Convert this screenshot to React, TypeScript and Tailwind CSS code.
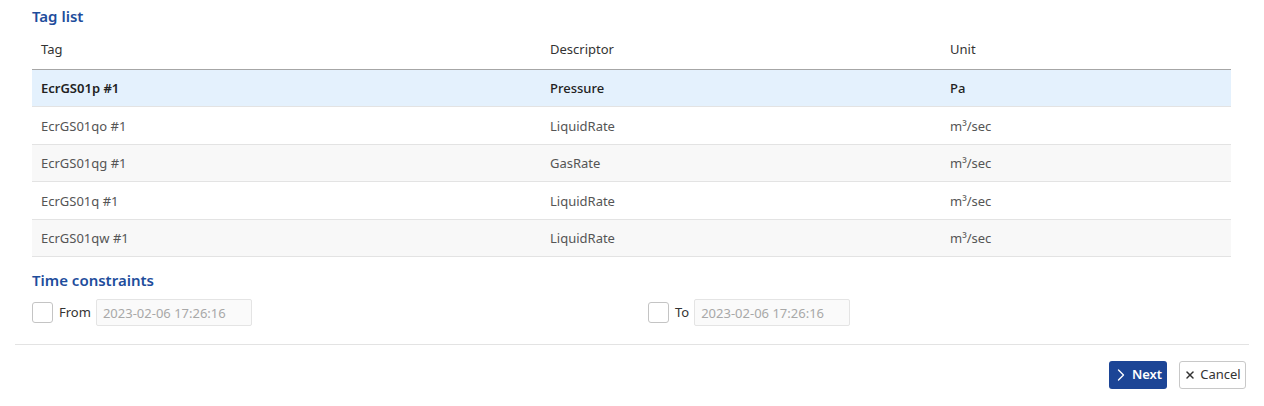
import { ChevronRight, X } from "lucide-react";

const rows = [
  { tag: "EcrGS01p #1", descriptor: "Pressure", unit: "Pa", selected: true },
  { tag: "EcrGS01qo #1", descriptor: "LiquidRate", unit: "m³/sec" },
  { tag: "EcrGS01qg #1", descriptor: "GasRate", unit: "m³/sec" },
  { tag: "EcrGS01q #1", descriptor: "LiquidRate", unit: "m³/sec" },
  { tag: "EcrGS01qw #1", descriptor: "LiquidRate", unit: "m³/sec" },
];

function DateField({ label }: { label: string }) {
  return (
    <div className="flex items-center">
      <span className="h-[21px] w-[21px] rounded-[3px] border border-[#c4c4c4] bg-white" />
      <span className="ml-[6px] mr-[5px] text-[13px] text-[#333]">{label}</span>
      <input
        disabled
        value="2023-02-06 17:26:16"
        className="h-[27px] w-[156px] rounded-[2px] border border-[#e4e4e4] bg-[#fafafa] px-[6px] text-[13px] text-[#a8a8a8]"
      />
    </div>
  );
}

export default function App() {
  return (
    <div className="h-[406px] w-[1264px] bg-white font-['Noto_Sans',sans-serif] text-[#333]">
      <div className="px-[32px] pt-[4px]">
        <h2 className="text-[15px] font-semibold leading-[24px] text-[#1e4d9c]">Tag list</h2>
        <table className="w-[1199px] border-collapse text-left text-[13px]">
          <thead>
            <tr className="h-[41px] border-b border-[#a6a6a6] text-[#333]">
              <th className="w-[509px] px-[9px] pt-[3px] font-normal">Tag</th>
              <th className="w-[400px] px-[9px] pt-[3px] font-normal">Descriptor</th>
              <th className="px-[9px] pt-[3px] font-normal">Unit</th>
            </tr>
          </thead>
          <tbody>
            {rows.map((r, i) => (
              <tr
                key={r.tag}
                className={
                  r.selected
                    ? "h-[37.5px] border-b border-[#e3e3e3] bg-[#e4f1fd] font-medium text-[#222]"
                    : i % 2 === 0
                      ? "h-[37.5px] border-b border-[#e3e3e3] bg-[#f8f8f8] text-[#555]"
                      : "h-[37.5px] border-b border-[#e3e3e3] bg-white text-[#555]"
                }
              >
                <td className={r.selected ? "px-[9px] pt-[2px] font-semibold" : "px-[9px] pt-[2px]"}>{r.tag}</td>
                <td className="px-[9px] pt-[2px]">{r.descriptor}</td>
                <td className="px-[9px] pt-[2px]">{r.unit}</td>
              </tr>
            ))}
          </tbody>
        </table>
        <h2 className="mt-[11px] text-[15px] font-semibold leading-[24px] text-[#1e4d9c]">Time constraints</h2>
        <div className="mt-[7px] grid grid-cols-[616px_1fr]">
          <DateField label="From" />
          <DateField label="To" />
        </div>
      </div>
      <div className="mx-[15px] mt-[18px] border-t border-[#e3e3e3]" />
      <div className="flex justify-end gap-[12px] pr-[18px] pt-[16px]">
        <button className="flex h-[28px] w-[58px] items-center justify-center gap-[1px] rounded-[3px] bg-[#1c4596] text-[13px] font-semibold text-white">
          <ChevronRight className="-ml-[3px] h-[20px] w-[20px]" strokeWidth={1.6} />
          Next
        </button>
        <button className="flex h-[28px] w-[67px] items-center justify-center gap-[4px] rounded-[3px] border border-[#c8c8c8] bg-white text-[13px] text-[#333]">
          <X className="h-[12px] w-[12px]" strokeWidth={3} />
          Cancel
        </button>
      </div>
    </div>
  );
}
